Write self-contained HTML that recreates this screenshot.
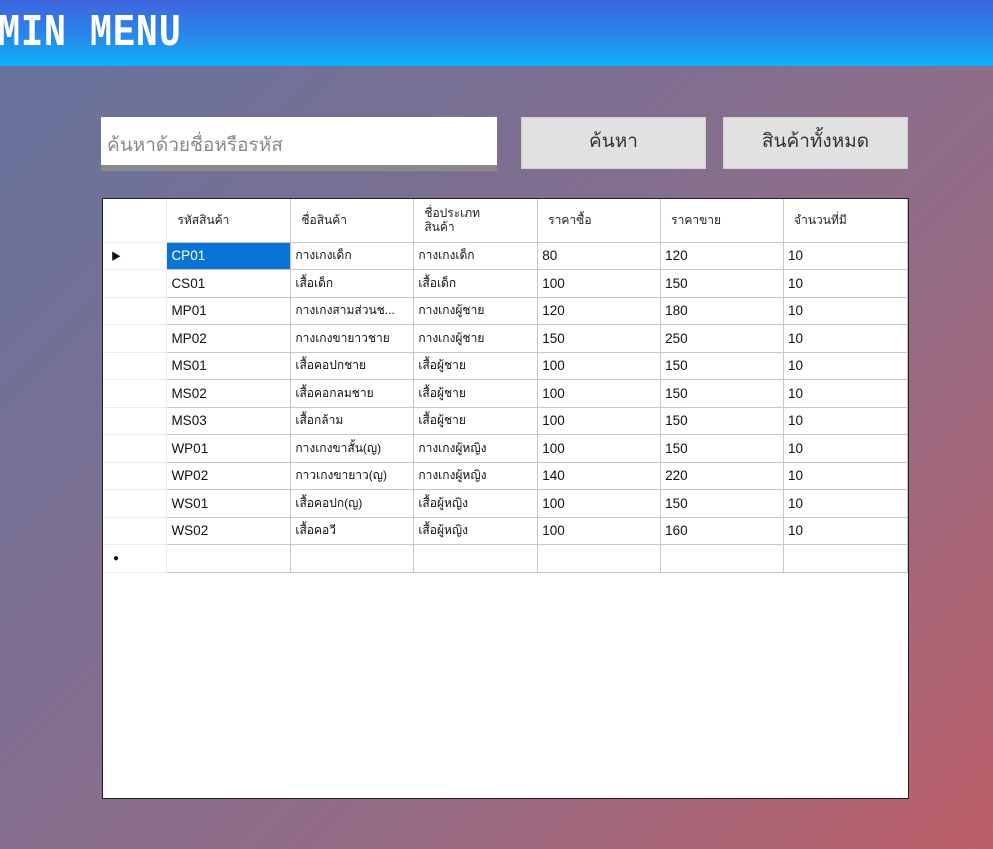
<!DOCTYPE html>
<html><head><meta charset="utf-8"><style>
*{margin:0;padding:0;box-sizing:border-box}
body{width:993px;height:849px;overflow:hidden;position:relative;background:linear-gradient(135deg,#64739e 0%,#7c6f92 35%,#946c86 65%,#bd5f68 100%);font-family:"Liberation Sans","Noto Sans CJK SC",sans-serif}
.hdr{position:absolute;left:0;top:0;width:993px;height:66px;background:linear-gradient(180deg,#3f63dd 0%,#2a84ea 50%,#0fb0f8 100%)}
.hdr span{position:absolute;left:-2px;top:8px;font-family:"Liberation Mono",monospace;font-size:45px;color:#fff;font-weight:bold;letter-spacing:1px;transform:scaleX(0.82);transform-origin:left}
.search{position:absolute;left:101px;top:117px;width:396px;background:#fff;border-bottom:6px solid #8a8a8a;height:54px;font-size:19px;color:#8a8a8a;padding:13px 0 0 6px}
.btn{position:absolute;top:117px;height:52px;background:#e1e1e1;border:1px solid #d0d0d0;font-size:19px;color:#333;text-align:center;line-height:48px}
.grid{position:absolute;left:102px;top:198px;width:807px;height:601px;background:#fff;border:1px solid #222}
table{border-collapse:collapse;position:absolute;left:0;top:0}
td{border:1px solid #c8c8c8;height:27.5px;font-size:13.5px;color:#111;padding:0 0 0 4px;white-space:nowrap;overflow:hidden}
td.t{font-size:12px}
tr.h td{height:43px;font-size:12px;border-top:none;padding-left:10px;color:#222;line-height:14px}
td.rh{border-color:#ececec;border-left:none;width:64px}
.sel{background:#0a74d6;color:#fff}
</style></head><body>
<div class="hdr"><span>MIN MENU</span></div>
<div class="search">ค้นหาด้วยชื่อหรือรหัส</div>
<div class="btn" style="left:521px;width:185px">ค้นหา</div>
<div class="btn" style="left:723px;width:185px">สินค้าทั้งหมด</div>
<div class="grid"><table>
<colgroup><col style="width:64px"><col style="width:124px"><col style="width:123px"><col style="width:124px"><col style="width:123px"><col style="width:123px"><col style="width:124px"></colgroup>
<tr class="h"><td class="rh"></td><td>รหัสสินค้า</td><td>ชื่อสินค้า</td><td>ชื่อประเภท<br>สินค้า</td><td>ราคาซื้อ</td><td>ราคาขาย</td><td>จำนวนที่มี</td></tr>
<tr><td class="rh" style="font-size:10px;padding-left:8px">▶</td><td class="sel">CP01</td><td class="t">กางเกงเด็ก</td><td class="t">กางเกงเด็ก</td><td>80</td><td>120</td><td>10</td></tr>
<tr><td class="rh"></td><td>CS01</td><td class="t">เสื้อเด็ก</td><td class="t">เสื้อเด็ก</td><td>100</td><td>150</td><td>10</td></tr>
<tr><td class="rh"></td><td>MP01</td><td class="t">กางเกงสามส่วนช...</td><td class="t">กางเกงผู้ชาย</td><td>120</td><td>180</td><td>10</td></tr>
<tr><td class="rh"></td><td>MP02</td><td class="t">กางเกงขายาวชาย</td><td class="t">กางเกงผู้ชาย</td><td>150</td><td>250</td><td>10</td></tr>
<tr><td class="rh"></td><td>MS01</td><td class="t">เสื้อคอปกชาย</td><td class="t">เสื้อผู้ชาย</td><td>100</td><td>150</td><td>10</td></tr>
<tr><td class="rh"></td><td>MS02</td><td class="t">เสื้อคอกลมชาย</td><td class="t">เสื้อผู้ชาย</td><td>100</td><td>150</td><td>10</td></tr>
<tr><td class="rh"></td><td>MS03</td><td class="t">เสื้อกล้าม</td><td class="t">เสื้อผู้ชาย</td><td>100</td><td>150</td><td>10</td></tr>
<tr><td class="rh"></td><td>WP01</td><td class="t">กางเกงขาสั้น(ญ)</td><td class="t">กางเกงผู้หญิง</td><td>100</td><td>150</td><td>10</td></tr>
<tr><td class="rh"></td><td>WP02</td><td class="t">กาวเกงขายาว(ญ)</td><td class="t">กางเกงผู้หญิง</td><td>140</td><td>220</td><td>10</td></tr>
<tr><td class="rh"></td><td>WS01</td><td class="t">เสื้อคอปก(ญ)</td><td class="t">เสื้อผู้หญิง</td><td>100</td><td>150</td><td>10</td></tr>
<tr><td class="rh"></td><td>WS02</td><td class="t">เสื้อคอวี</td><td class="t">เสื้อผู้หญิง</td><td>100</td><td>160</td><td>10</td></tr>
<tr><td class="rh" style="font-size:10px;padding-left:10px">●</td><td></td><td></td><td></td><td></td><td></td><td></td></tr>
</table></div>
</body></html>
